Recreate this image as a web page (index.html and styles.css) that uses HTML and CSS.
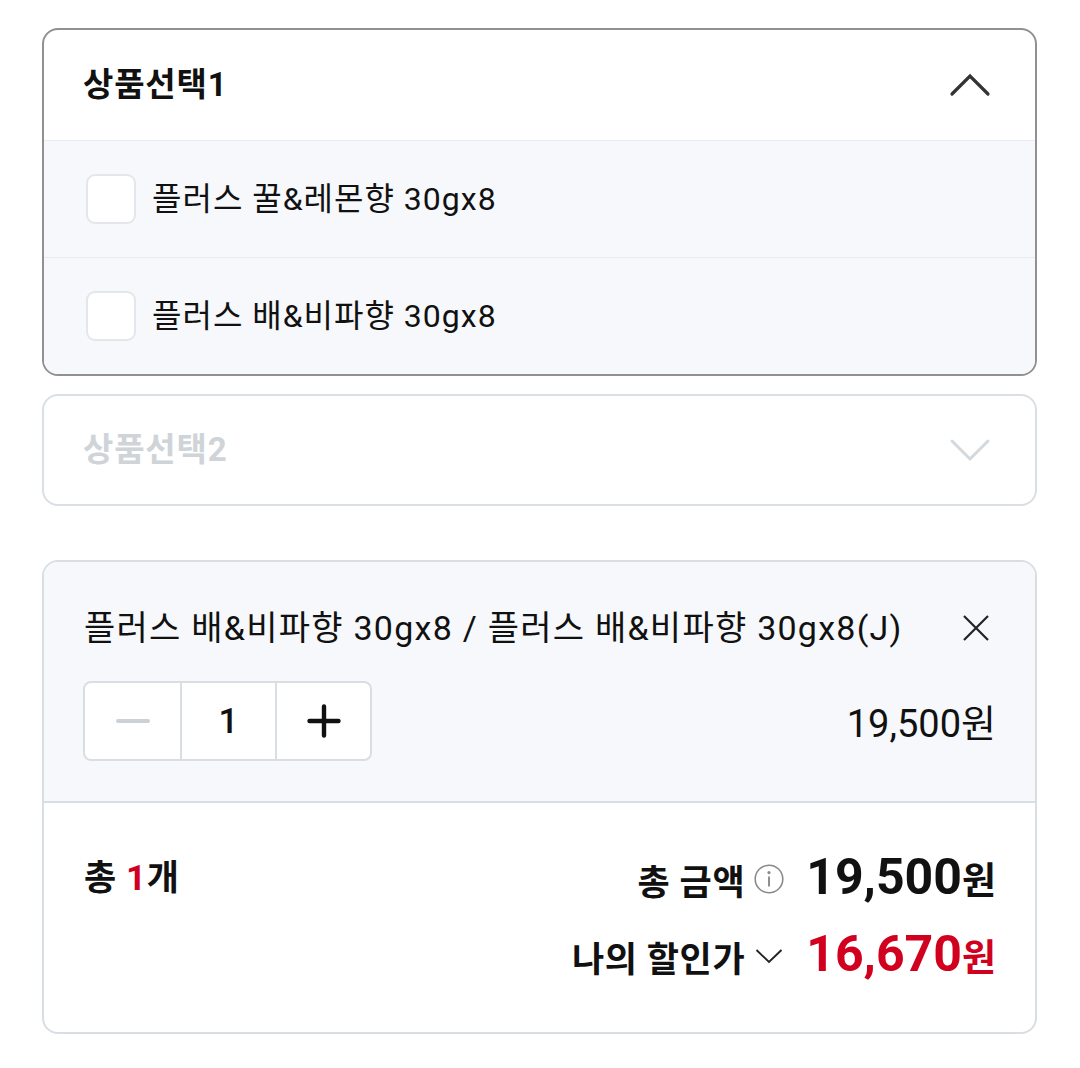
FILE: index.html
```html
<!DOCTYPE html>
<html lang="ko">
<head>
<meta charset="utf-8">
<link rel="stylesheet" href="styles.css">
</head>
<body>
<div class="page">
  <section class="select open">
    <div class="select-head">
      <span class="select-title">상품선택1</span>
      <svg class="chev" viewBox="0 0 52 52" width="52" height="52"><path d="M8 35 L26 17 L44 35" fill="none" stroke="#333" stroke-width="3.2" stroke-linecap="round" stroke-linejoin="miter"/></svg>
    </div>
    <div class="opt">
      <span class="check"></span>
      <span class="opt-label">플러스 꿀&amp;레몬향 30gx8</span>
    </div>
    <div class="opt">
      <span class="check"></span>
      <span class="opt-label">플러스 배&amp;비파향 30gx8</span>
    </div>
  </section>

  <section class="select closed">
    <div class="select-head">
      <span class="select-title">상품선택2</span>
      <svg class="chev" viewBox="0 0 52 52" width="52" height="52"><path d="M8 17 L26 35 L44 17" fill="none" stroke="#d3d8dc" stroke-width="3" stroke-linecap="round"/></svg>
    </div>
  </section>

  <section class="cart">
    <div class="cart-item">
      <div class="item-top">
        <span class="item-name">플러스 배&amp;비파향 30gx8 / 플러스 배&amp;비파향 30gx8(J)</span>
        <span class="close"><svg viewBox="0 0 28 28" width="28" height="28"><path d="M2 2 L26 26 M26 2 L2 26" stroke="#222" stroke-width="2.2" fill="none"/></svg></span>
      </div>
      <div class="item-bottom">
        <div class="stepper">
          <span class="step minus"><svg viewBox="0 0 34 8" width="34" height="8"><path d="M2 4 H32" stroke="#cbd1d7" stroke-width="4" stroke-linecap="round"/></svg></span>
          <span class="step qty">1</span>
          <span class="step plus"><svg viewBox="0 0 34 34" width="34" height="34"><path d="M17 2.5 V31.5 M2.5 17 H31.5" stroke="#111" stroke-width="4.4" stroke-linecap="round"/></svg></span>
        </div>
        <span class="item-price">19,500원</span>
      </div>
    </div>
    <div class="cart-sum">
      <div class="count">총 <em>1</em>개</div>
      <div class="totals">
        <div class="total-row">
          <span class="t-label">총 금액</span>
          <span class="info"><svg viewBox="0 0 30 30" width="30" height="30"><circle cx="15" cy="15" r="13.8" fill="none" stroke="#8a8a8a" stroke-width="1.6"/><circle cx="15" cy="8.6" r="1.6" fill="#8a8a8a"/><path d="M15 12.5 V22.5" stroke="#8a8a8a" stroke-width="1.9"/></svg></span>
          <span class="t-price">19,500<small>원</small></span>
        </div>
        <div class="total-row">
          <span class="t-label">나의 할인가</span>
          <span class="info"><svg viewBox="0 0 30 30" width="30" height="30"><path d="M2.5 9 L15 21 L27.5 9" fill="none" stroke="#222" stroke-width="1.9"/></svg></span>
          <span class="t-price red">16,670<small>원</small></span>
        </div>
      </div>
    </div>
  </section>
</div>
</body>
</html>
```

FILE: styles.css
```css
* { box-sizing: border-box; }
html, body { margin: 0; padding: 0; background: #fff; }
body {
  font-family: Roboto, "Noto Sans CJK KR", sans-serif;
  color: #111;
}
.page {
  padding: 28px 43px 0 42px;
  display: flex;
  flex-direction: column;
}
.select {
  border-radius: 16px;
  overflow: hidden;
  background: #fff;
}
.select.open { border: 2px solid #919191; }
.select.closed { border: 2px solid #dadfe3; margin-top: 18px; }
.select-head {
  height: 110px;
  display: flex;
  align-items: center;
  justify-content: space-between;
  padding: 0 39px 0 39px;
}
.select.closed .select-head { height: 108px; }
.select-title {
  font-size: 33px;
  font-weight: 700;
  line-height: 40px;
  letter-spacing: 0.8px;
}
.select.closed .select-title { color: #cfd4d9; }
.chev { display: block; }
.opt {
  height: 117px;
  border-top: 1px solid #e8ebef;
  background: #f6f8fb;
  display: flex;
  align-items: center;
  padding-left: 42px;
  gap: 16px;
}
.opt:last-child { height: 117px; }
.check {
  width: 50px;
  height: 50px;
  border: 2px solid #e3e7eb;
  border-radius: 9px;
  background: #fff;
}
.opt-label {
  font-size: 32px;
  line-height: 40px;
  letter-spacing: 1px;
}
.cart {
  margin-top: 54px;
  border: 2px solid #d9dee3;
  border-radius: 16px;
  overflow: hidden;
}
.cart-item {
  background: #f6f8fb;
  padding: 46px 39px 40px 40px;
  border-bottom: 2px solid #d9dee3;
}
.item-top {
  display: flex;
  justify-content: space-between;
  align-items: center;
}
.item-name {
  font-size: 34px;
  line-height: 40px;
  letter-spacing: 1.25px;
  white-space: nowrap;
}
.close {
  width: 40px;
  height: 40px;
  display: flex;
  align-items: center;
  justify-content: center;
}
.item-bottom {
  margin-top: 33px;
  display: flex;
  justify-content: space-between;
  align-items: center;
}
.stepper {
  display: flex;
  height: 80px;
  border: 2px solid #d9dee3;
  border-radius: 8px;
  background: #fff;
  margin-left: -1px;
}
.step {
  width: 95px;
  display: flex;
  align-items: center;
  justify-content: center;
}
.step + .step { border-left: 2px solid #d9dee3; }
.qty { font-size: 35px; font-weight: 500; }
.item-price {
  font-size: 38px;
  line-height: 44px;
  margin-top: 6px;
}
.cart-sum {
  display: flex;
  justify-content: space-between;
  align-items: flex-start;
  padding: 50px 39px 50px 40px;
}
.count {
  font-size: 35px;
  font-weight: 700;
  line-height: 52px;
  letter-spacing: 0.6px;
}
.count em { font-style: normal; color: #d1001f; }
.totals {
  display: flex;
  flex-direction: column;
  align-items: flex-end;
  gap: 25px;
}
.total-row {
  display: flex;
  align-items: center;
  height: 52px;
}
.t-label {
  font-size: 35px;
  font-weight: 700;
  letter-spacing: 0.6px;
}
.info {
  display: flex;
  margin-left: 9px;
  margin-right: 22px;
}
.t-price {
  font-size: 50px;
  font-weight: 700;
  line-height: 52px;
}
.t-price small {
  font-size: 37px;
  font-weight: 700;
}
.t-price.red { color: #d1001f; }
```
